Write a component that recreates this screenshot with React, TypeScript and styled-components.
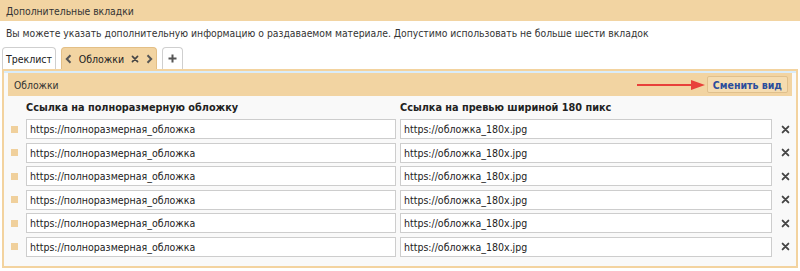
import React from "react";
import styled, { createGlobalStyle } from "styled-components";

const GlobalStyle = createGlobalStyle`
  body {
    margin: 0;
    background: #ffffff;
    font-family: "DejaVu Sans Condensed", "DejaVu Sans", sans-serif;
    font-size: 10.3px;
    color: #222;
  }
`;

const Page = styled.div`
  width: 800px;
  height: 271px;
  overflow: hidden;
`;

const TopBar = styled.div`
  height: 21px;
  background-color: #f2d4a2;
  display: flex;
  align-items: center;
  padding: 0 6px;
  font-size: 10.3px;
  color: #333;
`;

const Hint = styled.div`
  padding: 0 6px;
  height: 24px;
  display: flex;
  align-items: center;
  color: #333;
`;

const Tabs = styled.div`
  display: flex;
  align-items: flex-end;
  gap: 5px;
  padding: 0 2px;
  height: 24px;
`;

const Tab = styled.div<{ $active?: boolean; $w: number }>`
  width: ${(p) => p.$w}px;
  height: 22px;
  box-sizing: border-box;
  display: flex;
  align-items: center;
  justify-content: center;
  gap: 7px;
  border: 1px solid ${(p) => (p.$active ? "#e3bf86" : "#cfcfcf")};
  border-bottom: none;
  border-radius: 4px 4px 0 0;
  background-color: ${(p) => (p.$active ? "#f2d4a2" : "#ffffff")};
  color: #222;
  font-size: 10.5px;
`;

const Panel = styled.div`
  margin: 0 2px;
  height: 199px;
  box-sizing: border-box;
  border: 2px solid #f3d39f;
  box-shadow: inset 0 2px 0 #d9ecfa;
  background-color: #f9f9f9;
  padding: 2px 4px 0;
`;

const PanelHeader = styled.div`
  height: 23px;
  background-color: #f2d4a2;
  display: flex;
  align-items: center;
  padding: 0 4px 0 6px;
  color: #333;
`;

const PanelTitle = styled.span`
  flex: 1;
`;

const SwitchButton = styled.button`
  height: 17px;
  padding: 0 5px;
  margin-left: 2px;
  border: 1px solid #e0c08c;
  border-radius: 2px;
  background-color: #f5dcb0;
  color: #2b4d9c;
  font-family: "DejaVu Sans Condensed", "DejaVu Sans", sans-serif;
  font-size: 10.5px;
  font-weight: bold;
`;

const ColumnHeads = styled.div`
  display: grid;
  grid-template-columns: 370px 372px;
  column-gap: 4px;
  padding-left: 18px;
  height: 23px;
  align-items: center;
  font-weight: bold;
  font-size: 10.8px;
  color: #222;
`;

const Rows = styled.div`
  display: flex;
  flex-direction: column;
  gap: 3.5px;
`;

const Row = styled.div`
  display: flex;
  align-items: center;
  height: 20px;
`;

const Bullet = styled.span`
  width: 7px;
  height: 7px;
  background-color: #f0d09c;
  margin: 0 8px 0 3px;
`;

const Field = styled.div<{ $w: number }>`
  width: ${(p) => p.$w}px;
  height: 20px;
  box-sizing: border-box;
  display: flex;
  align-items: center;
  margin-right: 4px;
  border: 1px solid #cdcdcd;
  background: #ffffff;
  padding: 0 3px;
  font-size: 10.5px;
  color: #222;
  white-space: nowrap;
`;

const RemoveWrap = styled.span`
  display: flex;
  margin-left: 5px;
`;

const Cross = ({ size = 9 }: { size?: number }) => (
  <svg width={size} height={size} viewBox="0 0 10 10">
    <path d="M1.8 1.8 L8.2 8.2 M8.2 1.8 L1.8 8.2" stroke="#454545" strokeWidth="2.1" strokeLinecap="round" />
  </svg>
);

const Chevron = ({ dir }: { dir: "left" | "right" }) => (
  <svg width="7" height="10" viewBox="0 0 7 10">
    <path
      d={dir === "left" ? "M5.5 1.2 L1.8 5 L5.5 8.8" : "M1.5 1.2 L5.2 5 L1.5 8.8"}
      fill="none"
      stroke="#555"
      strokeWidth="2"
    />
  </svg>
);

const Plus = () => (
  <svg width="9" height="9" viewBox="0 0 9 9">
    <path d="M4.5 0.5 V8.5 M0.5 4.5 H8.5" stroke="#555" strokeWidth="2" />
  </svg>
);

const Arrow = () => (
  <svg width="68" height="10" viewBox="0 0 68 10">
    <line x1="0" y1="5" x2="58" y2="5" stroke="#e8403a" strokeWidth="2" />
    <polygon points="54,0 68,5 54,10" fill="#e8403a" />
  </svg>
);

const rows = [1, 2, 3, 4, 5, 6];

const App = () => {
  return (
    <Page>
      <GlobalStyle />
      <TopBar>Дополнительные вкладки</TopBar>
      <Hint>
        Вы можете указать дополнительную информацию о раздаваемом материале. Допустимо использовать не больше шести вкладок
      </Hint>
      <Tabs>
        <Tab $w={54}>Треклист</Tab>
        <Tab $active $w={96}>
          <Chevron dir="left" />
          Обложки
          <Cross size={8} />
          <Chevron dir="right" />
        </Tab>
        <Tab $w={21}>
          <Plus />
        </Tab>
      </Tabs>
      <Panel>
        <PanelHeader>
          <PanelTitle>Обложки</PanelTitle>
          <Arrow />
          <SwitchButton>Сменить вид</SwitchButton>
        </PanelHeader>
        <ColumnHeads>
          <span>Ссылка на полноразмерную обложку</span>
          <span>Ссылка на превью шириной 180 пикс</span>
        </ColumnHeads>
        <Rows>
          {rows.map((r) => (
            <Row key={r}>
              <Bullet />
              <Field $w={370}>https://полноразмерная_обложка</Field>
              <Field $w={372}>https://обложка_180x.jpg</Field>
              <RemoveWrap>
                <Cross />
              </RemoveWrap>
            </Row>
          ))}
        </Rows>
      </Panel>
    </Page>
  );
};

export default App;
